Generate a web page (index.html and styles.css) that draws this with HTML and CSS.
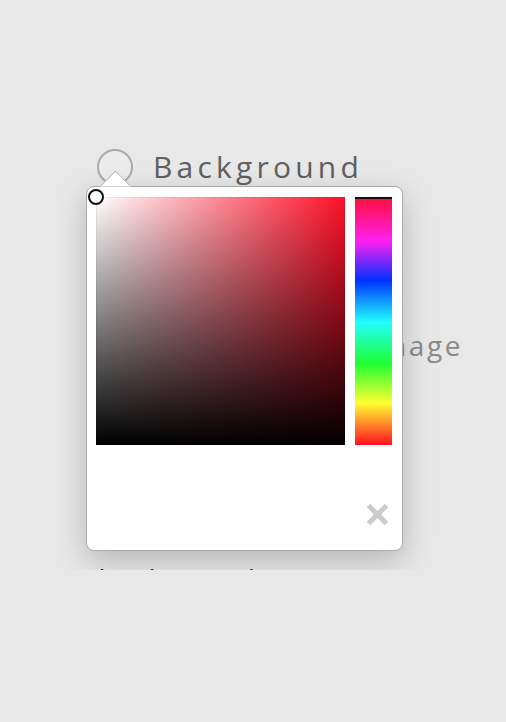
FILE: index.html
```html
<!DOCTYPE html>
<html>
<head>
<meta charset="utf-8">
<link rel="stylesheet" href="styles.css">
</head>
<body>
<div class="stage">
  <div class="row row-bg">
    <span class="radio"></span>
    <span class="label">Background</span>
  </div>
  <div class="row row-opts">
    <div class="opt">
      <span class="radio"></span>
      <span class="label small">Color</span>
    </div>
    <div class="opt">
      <span class="radio"></span>
      <span class="label small">Image</span>
    </div>
  </div>
  <div class="row row-title">
    <span class="label dark">Ideal as a base</span>
  </div>

  <div class="picker">
    <span class="arrow"></span>
    <span class="handle"></span>
    <div class="picker-top">
      <div class="sat"></div>
      <div class="hue"></div>
    </div>
    <div class="picker-foot">
      <svg class="close" width="25" height="25" viewBox="0 0 25 25">
        <path d="M3.5 3.5 L21.5 21.5 M21.5 3.5 L3.5 21.5" stroke="#cccccc" stroke-width="5" fill="none"/>
      </svg>
    </div>
  </div>
</div>
</body>
</html>
```
FILE: styles.css
```css
html, body {
  margin: 0;
  padding: 0;
  background: #e8e8e8;
}
body {
  font-family: "Open Sans", "Noto Sans", sans-serif;
}
.stage {
  position: relative;
  height: 570px;
  overflow: hidden;
  display: flex;
  flex-direction: column;
}
.row {
  display: flex;
  align-items: center;
  gap: 20px;
  height: 36px;
}
.row-bg {
  margin-top: 149px;
  padding-left: 97px;
}
.row-opts {
  margin-top: 142px;
  padding-left: 97px;
  gap: 78px;
}
.row-title {
  margin-top: 199px;
  padding-left: 76px;
}
.opt {
  display: flex;
  align-items: center;
  gap: 20px;
}
.radio {
  box-sizing: border-box;
  width: 36px;
  height: 36px;
  border-radius: 50%;
  border: 2px solid #aaaaaa;
  background: #ececec;
  flex: none;
}
.label {
  font-size: 30px;
  line-height: 36px;
  letter-spacing: 4.2px;
  color: #606060;
  white-space: nowrap;
}
.label.small {
  font-size: 28px;
  letter-spacing: 2.6px;
  color: #8a8a8a;
}
.label.dark {
  color: #333333;
  letter-spacing: 3px;
}
.picker {
  position: absolute;
  left: 86px;
  top: 186px;
  width: 317px;
  height: 365px;
  box-sizing: border-box;
  background: #ffffff;
  border: 1px solid #aaaaaa;
  border-radius: 8px;
  box-shadow: 0 10px 30px rgba(0, 0, 0, 0.22);
  padding: 10px 10px 10px 9px;
  display: flex;
  flex-direction: column;
}
.arrow {
  position: absolute;
  left: 17px;
  top: -12px;
  width: 22px;
  height: 22px;
  background: #ffffff;
  border-top: 1px solid #aaaaaa;
  border-left: 1px solid #aaaaaa;
  transform: rotate(45deg);
  clip-path: polygon(0 0, 100% 0, 0 100%);
}
.handle {
  position: absolute;
  left: 1px;
  top: 2px;
  width: 16px;
  height: 16px;
  box-sizing: border-box;
  border-radius: 50%;
  border: 2px solid #111111;
  box-shadow: inset 0 0 0 1px #ffffff;
  z-index: 2;
}
.picker-top {
  display: flex;
  gap: 10px;
}
.sat {
  width: 249px;
  height: 248px;
  background:
    linear-gradient(to top, #000000, rgba(0, 0, 0, 0)),
    linear-gradient(to right, #ffffff, #ff1028);
  box-shadow: inset 0 0 0 1px rgba(0, 0, 0, 0.06);
}
.hue {
  width: 37px;
  height: 248px;
  box-sizing: border-box;
  border-top: 2px solid #111111;
  background: linear-gradient(to bottom,
    #ff1040 0%,
    #ff20f0 17%,
    #0030ff 33%,
    #20ffff 50%,
    #20ff30 67%,
    #ffff30 83%,
    #ff1020 100%);
}
.picker-foot {
  flex: 1;
  display: flex;
  justify-content: flex-end;
  align-items: flex-end;
  padding: 0 2px 13px 0;
}
.close {
  display: block;
}
```
